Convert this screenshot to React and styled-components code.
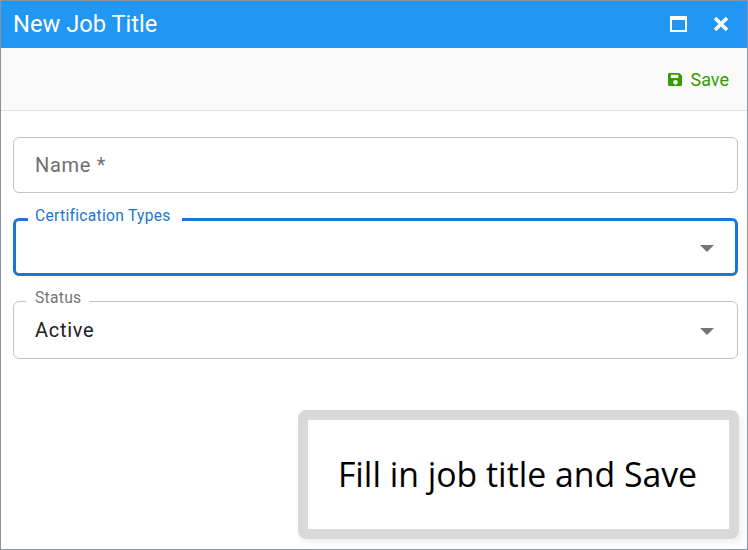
import styled, { createGlobalStyle } from 'styled-components';

const GlobalStyle = createGlobalStyle`
  html, body {
    margin: 0;
    padding: 0;
    background: #ffffff;
  }
  body {
    font-family: Roboto, "Liberation Sans", sans-serif;
  }
`;

const Window = styled.div`
  position: relative;
  box-sizing: border-box;
  width: 748px;
  height: 550px;
  border: 1px solid #8595a3;
  background: #ffffff;
  overflow: hidden;
`;

const TitleBar = styled.header`
  display: flex;
  align-items: center;
  justify-content: space-between;
  box-sizing: border-box;
  height: 47px;
  padding: 0 18px 2px 12px;
  background: #2196f3;
  color: #ffffff;
`;

const Title = styled.h1`
  margin: 0;
  font-size: 23.7px;
  font-weight: 400;
`;

const WindowButtons = styled.div`
  display: flex;
  align-items: center;
  gap: 26px;
`;

const IconSvg = styled.svg`
  display: block;
`;

const Toolbar = styled.div`
  display: flex;
  align-items: center;
  justify-content: flex-end;
  box-sizing: border-box;
  height: 63px;
  padding: 0 18px 0 0;
  background: #fafafa;
  border-bottom: 1px solid #e0e0e0;
`;

const SaveButton = styled.button`
  display: flex;
  align-items: center;
  gap: 8px;
  padding: 0;
  border: 0;
  background: none;
  color: #329c00;
  font-family: inherit;
  font-size: 18px;
`;

const Form = styled.form`
  display: flex;
  flex-direction: column;
  gap: 25px;
  padding: 26px 9px 0 12px;
`;

const Field = styled.div`
  position: relative;
  display: flex;
  align-items: center;
  justify-content: space-between;
  box-sizing: border-box;
  height: ${(p) => p.$height || 58}px;
  padding: 0 24px 0 22px;
`;

const Outline = styled.fieldset`
  position: absolute;
  inset: 0;
  margin: 0;
  padding: 0;
  border: ${(p) => (p.$focused ? '3px solid #1976d2' : '1px solid #c4c4c4')};
  border-radius: 6px;
  pointer-events: none;
`;

const Notch = styled.legend`
  margin-left: 12px;
  padding: ${(p) => (p.$focused ? '0 11px 0 7px' : '0 8px 0 9px')};
  font-size: 15.6px;
  line-height: 0;
  letter-spacing: 0.3px;
  color: ${(p) => (p.$focused ? '#1976d2' : '#757575')};
  transform: translateY(-4px);
`;

const Placeholder = styled.span`
  font-size: 20px;
  letter-spacing: 0.7px;
  color: #6f6f6f;
`;

const Value = styled.span`
  font-size: 20px;
  letter-spacing: 0.7px;
  color: #212121;
`;

const Spacer = styled.span`
  flex: 1;
`;

const Arrow = styled.span`
  width: 0;
  height: 0;
  margin-top: 2px;
  border-left: 7px solid transparent;
  border-right: 7px solid transparent;
  border-top: 7px solid #757575;
`;

const Callout = styled.div`
  position: absolute;
  left: 297px;
  top: 409px;
  display: flex;
  align-items: center;
  justify-content: center;
  box-sizing: border-box;
  width: 441px;
  height: 129px;
  padding: 0 2px 2px 0;
  border: 10px solid #d9d9d9;
  border-radius: 8px;
  background: #ffffff;
  box-shadow: 3px 4px 6px rgba(0, 0, 0, 0.06);
  font-family: "Open Sans", "Noto Sans", sans-serif;
  font-size: 33.8px;
  color: #000000;
`;

const SaveIcon = () => (
  <IconSvg width="15" height="15" viewBox="0 0 16 16">
    <path
      fill="#329c00"
      fillRule="evenodd"
      d="M1.5 1H12l3 3v9.5a1.5 1.5 0 0 1-1.5 1.5h-12A1.5 1.5 0 0 1 0 13.5v-11A1.5 1.5 0 0 1 1.5 1ZM3 3v3.5h8V3H3Zm5 5.5a2.5 2.5 0 1 0 0 5 2.5 2.5 0 0 0 0-5Z"
    />
  </IconSvg>
);

const App = () => {
  return (
    <Window>
      <GlobalStyle />
      <TitleBar>
        <Title>New Job Title</Title>
        <WindowButtons>
          <IconSvg width="17" height="16" viewBox="0 0 17 16">
            <path
              fill="#ffffff"
              fillRule="evenodd"
              d="M0 0h17v16H0V0Zm2 4v10h13V4H2Z"
            />
          </IconSvg>
          <IconSvg width="16" height="16" viewBox="0 0 16 16">
            <path
              stroke="#ffffff"
              strokeWidth="3.6"
              d="M2 2l12 12M14 2L2 14"
            />
          </IconSvg>
        </WindowButtons>
      </TitleBar>
      <Toolbar>
        <SaveButton type="button">
          <SaveIcon />
          Save
        </SaveButton>
      </Toolbar>
      <Form>
        <Field $height={56}>
          <Outline />
          <Placeholder>Name *</Placeholder>
        </Field>
        <Field>
          <Outline $focused>
            <Notch $focused>Certification Types</Notch>
          </Outline>
          <Spacer />
          <Arrow />
        </Field>
        <Field>
          <Outline>
            <Notch>Status</Notch>
          </Outline>
          <Value>Active</Value>
          <Arrow />
        </Field>
      </Form>
      <Callout>Fill in job title and Save</Callout>
    </Window>
  );
};

export default App;
